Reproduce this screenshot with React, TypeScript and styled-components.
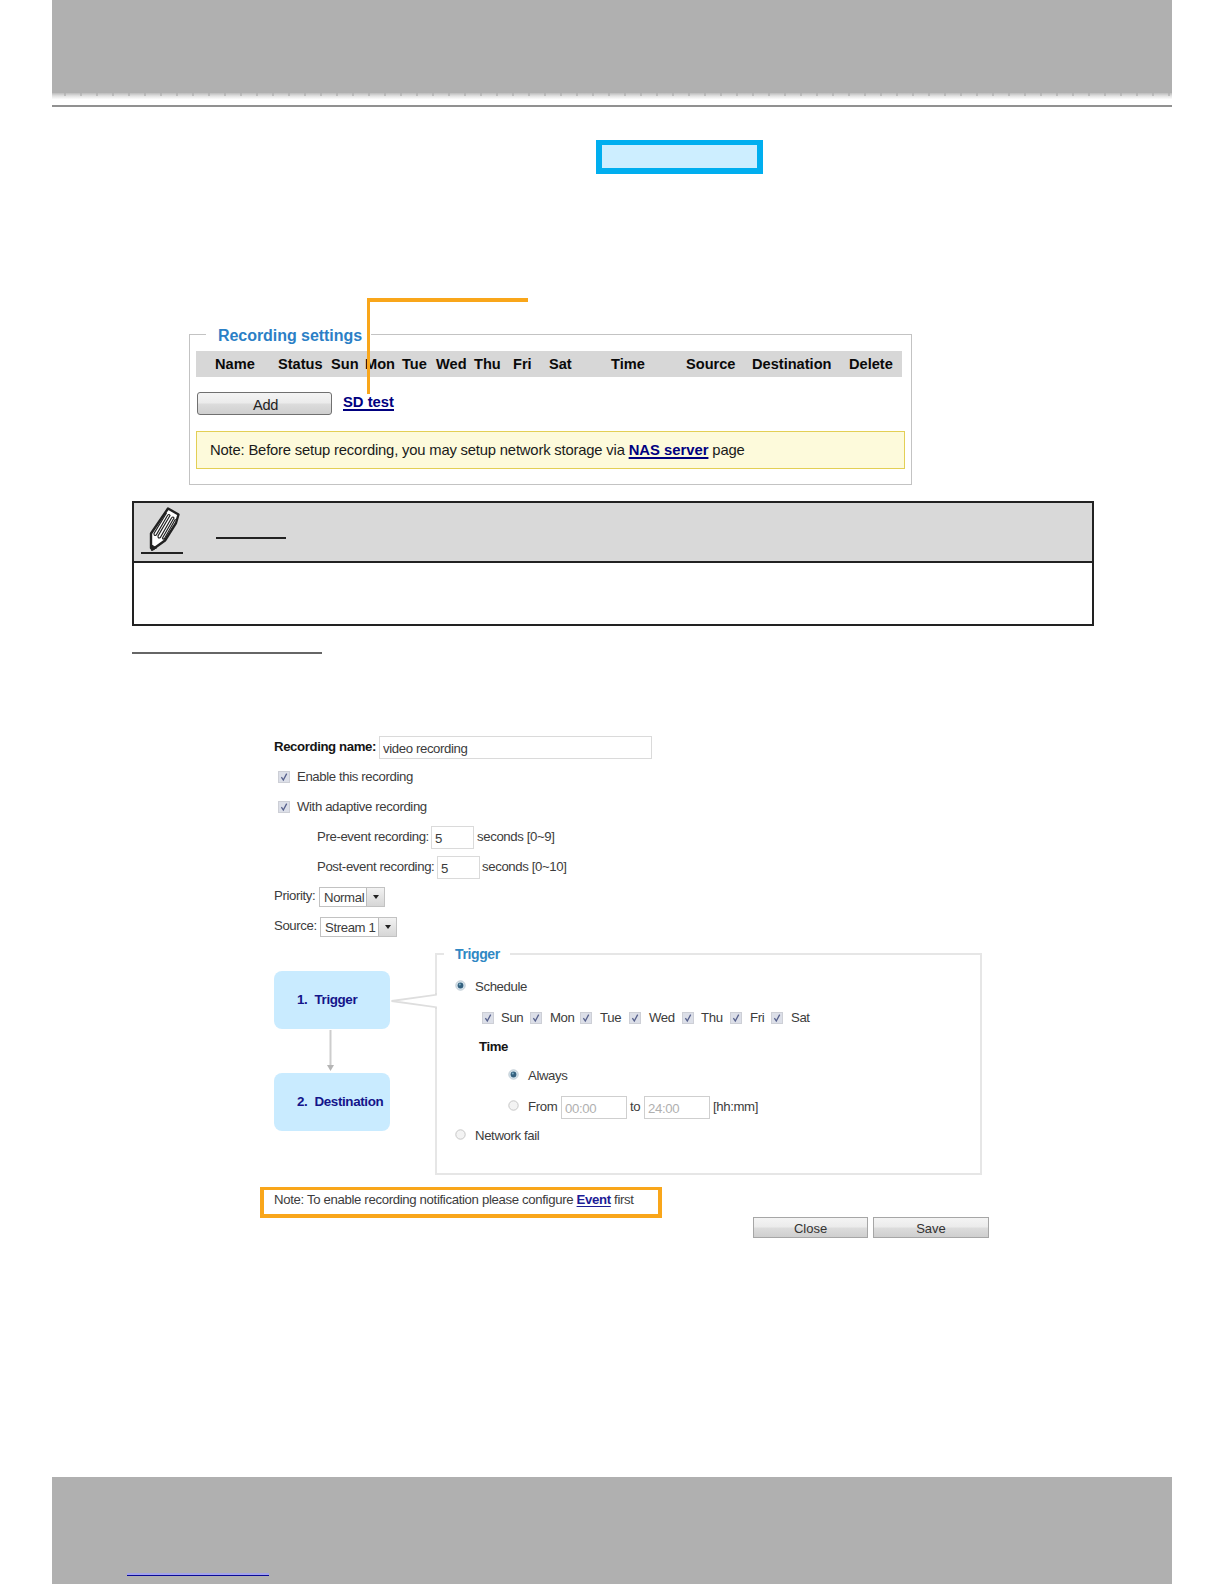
import React from "react";
import styled, { createGlobalStyle, css } from "styled-components";

const GlobalStyle = createGlobalStyle`
  * { box-sizing: border-box; }
  body { margin: 0; background: #fff; font-family: "Liberation Sans", Arial, sans-serif; }
`;

const Page = styled.main`
  width: 1224px;
  height: 1584px;
  display: flex;
  flex-direction: column;
  align-items: flex-start;
  overflow: hidden;
  background: #fff;
`;

const Header = styled.header`
  width: 1120px;
  margin-left: 52px;
  height: 107px;
  flex: none;
  display: flex;
  flex-direction: column;
  border-bottom: 2px solid #919191;
`;

const HeaderFill = styled.div`
  height: 93px;
  background: #b0b0b0;
`;

const HeaderFade = styled.div`
  height: 6px;
  background:
    repeating-linear-gradient(90deg, transparent 0 12px, rgba(176, 176, 176, 0.7) 12px 14px, transparent 14px 16px) 0 0 / 100% 3px no-repeat,
    linear-gradient(#bcbcbc, #e2e2e2 50%, #fcfcfc);
`;

const Highlight = styled.div`
  width: 167px;
  height: 34px;
  flex: none;
  margin: 33px 0 0 596px;
  background: #cdeeff;
  border: 6px solid #00aeef;
  border-top-width: 5px;
`;

const RecordingPanel = styled.section`
  position: relative;
  width: 723px;
  height: 151px;
  flex: none;
  margin: 160px 0 0 189px;
  border: 1px solid #c3c3c3;
`;

const PanelTitle = styled.h2`
  width: 165px;
  height: 20px;
  margin: -10px 0 0 16px;
  padding-left: 12px;
  background: #fff;
  color: #2b7fc6;
  font-size: 16px;
  line-height: 22px;
  letter-spacing: -0.05px;
  white-space: nowrap;
`;

const Pointer = styled.div`
  position: absolute;
  left: 177px;
  top: -37px;
  width: 161px;
  height: 96px;
  border-left: 3px solid #f9a61a;
  border-top: 4px solid #f9a61a;
  pointer-events: none;
`;

const HeadRow = styled.div`
  display: grid;
  grid-template-columns: 63px 53px 34px 37px 34px 38px 39px 36px 62px 75px 66px 97px 53px;
  width: 706px;
  height: 26px;
  margin: 6px 0 0 6px;
  padding-left: 19px;
  background: #d7d7d7;
  font-size: 14.6px;
  font-weight: bold;
  line-height: 27px;
  color: #0a0a0a;
  white-space: nowrap;
`;

const ActionRow = styled.div`
  display: flex;
  height: 23px;
  margin: 15px 0 0 7px;
`;

const buttonFace = css`
  display: flex;
  align-items: center;
  justify-content: center;
  padding: 0;
  font-family: inherit;
  background: linear-gradient(#f4f4f4, #ebebeb 48%, #dcdcdc 52%, #cfcfcf);
`;

const AddButton = styled.button`
  ${buttonFace}
  width: 135px;
  height: 23px;
  padding: 3px 0 0 2px;
  border: 1px solid #707070;
  border-radius: 3px;
  font-size: 14.6px;
  letter-spacing: -0.3px;
  color: #222;
`;

const BlueLink = styled.a<{ $thick?: boolean }>`
  color: ${(p) => (p.$thick ? "#00007f" : "#1c1c96")};
  font-weight: bold;
  text-decoration: underline;
  text-decoration-skip-ink: none;
  text-decoration-thickness: ${(p) => (p.$thick ? "2px" : "1px")};
  text-underline-offset: 2px;
  white-space: nowrap;
`;

const SdLink = styled(BlueLink)`
  margin: 1px 0 0 11px;
  font-size: 14.8px;
  line-height: 18px;
`;

const YellowNote = styled.p`
  width: 709px;
  height: 38px;
  margin: 16px 0 0 6px;
  padding-left: 13px;
  background: #fdfadb;
  border: 1px solid #e3cf55;
  color: #1a1a1a;
  font-size: 14.8px;
  line-height: 36px;
  letter-spacing: -0.18px;
  white-space: nowrap;

  a { letter-spacing: 0; }
`;

const NoteTable = styled.section`
  width: 962px;
  height: 125px;
  flex: none;
  margin: 16px 0 0 132px;
  border: 2px solid #222;
`;

const NoteHead = styled.div`
  display: flex;
  height: 60px;
  background: #d9d9d9;
  border-bottom: 2px solid #222;
`;

const Pencil = styled.svg`
  display: block;
  width: 56px;
  height: 58px;
`;

const Rule = styled.div<{ $w: number; $color: string }>`
  width: ${(p) => p.$w}px;
  height: 2px;
  flex: none;
  background: ${(p) => p.$color};
`;

const HeadRule = styled(Rule)`
  margin: 34px 0 0 26px;
`;

const SectionRule = styled(Rule)`
  margin: 26px 0 0 132px;
`;

const Form = styled.form`
  width: 740px;
  height: 585px;
  flex: none;
  margin: 78px 0 0 260px;
  display: flex;
  flex-direction: column;
  align-items: flex-start;
  font-size: 13.2px;
  letter-spacing: -0.38px;
  color: #3c3c3c;
`;

const Row = styled.div<{ $h?: number; $indent?: number }>`
  display: flex;
  align-items: center;
  flex: none;
  height: ${(p) => p.$h ?? 30}px;
  padding-left: ${(p) => p.$indent ?? 14}px;
  white-space: nowrap;
`;

const Text = styled.span<{ $w: number; $bold?: boolean }>`
  width: ${(p) => p.$w}px;
  flex: none;
  line-height: 16px;
  font-weight: ${(p) => (p.$bold ? "bold" : "normal")};
  color: ${(p) => (p.$bold ? "#151515" : "inherit")};
`;

const Field = styled.input<{ $w: number; $muted?: boolean; $end?: number }>`
  width: ${(p) => p.$w}px;
  height: 23px;
  flex: none;
  margin: 1px ${(p) => p.$end ?? 3}px 0 0;
  padding: 2px 0 0 3px;
  border: ${(p) => (p.$muted ? "1px solid #cfcfcf" : "1px solid #dadada")};
  outline: 0;
  background: #fff;
  font: inherit;
  letter-spacing: inherit;
  color: ${(p) => (p.$muted ? "#b0b0b0" : "#3c3c3c")};
`;

const Select = styled.div<{ $w: number }>`
  display: flex;
  align-items: center;
  justify-content: space-between;
  width: ${(p) => p.$w}px;
  height: 20px;
  margin-top: 1px;
  padding: 2px 0 0 4px;
  border: 1px solid #c2c2c2;
  line-height: 17px;
`;

const SelectArrow = styled.span`
  display: flex;
  align-items: center;
  justify-content: center;
  width: 18px;
  height: 18px;
  margin-top: -2px;
  border-left: 1px solid #bcbcbc;
  background: linear-gradient(#f2f2f2, #d6d6d6);

  &::after {
    content: "";
    border: 3px solid transparent;
    border-top: 4px solid #222;
    border-bottom: 0;
  }
`;

const CheckIcon = styled.svg<{ $gap: number }>`
  width: 12px;
  height: 12px;
  flex: none;
  margin-right: ${(p) => p.$gap}px;
`;

const RadioIcon = styled.svg`
  width: 11px;
  height: 11px;
  flex: none;
  margin: -3px 9px 0 0;
`;

const Flow = styled.div`
  display: flex;
  flex: none;
  height: 234px;
  padding: 12px 0 0 14px;
`;

const Steps = styled.div`
  display: flex;
  flex-direction: column;
  width: 116px;
  padding-top: 18px;
`;

const Step = styled.div`
  display: flex;
  align-items: center;
  height: 58px;
  padding: 0 0 2px 23px;
  border-radius: 8px;
  background: #c9ebff;
  color: #14148a;
  font-size: 13.4px;
  font-weight: bold;
  white-space: nowrap;
`;

const StepNo = styled.span`
  width: 17.5px;
`;

const StepArrow = styled.svg`
  display: block;
  width: 116px;
  height: 44px;
`;

const Callout = styled.svg`
  position: relative;
  z-index: 1;
  width: 47px;
  height: 18px;
  flex: none;
  margin: 39px -2px 0 0;
`;

const TriggerPanel = styled.div`
  width: 547px;
  height: 222px;
  border: 2px solid #e6e6e6;
`;

const TriggerTitle = styled.h3`
  width: 66px;
  height: 22px;
  margin: -12px 0 7px 7px;
  padding-left: 11px;
  background: #fff;
  color: #3088c4;
  font-size: 14px;
  line-height: 22px;
`;

const EventNote = styled.p`
  width: 402px;
  height: 31px;
  flex: none;
  margin: 12px 0 0;
  padding-left: 10px;
  border: 4px solid #f9a61a;
  border-top-width: 3px;
  line-height: 20px;
  letter-spacing: -0.34px;
  white-space: nowrap;
`;

const Buttons = styled.div`
  display: flex;
  gap: 5px;
  margin: -1px 0 0 493px;
`;

const FormButton = styled.button<{ $w: number }>`
  ${buttonFace}
  width: ${(p) => p.$w}px;
  height: 21px;
  padding-top: 2px;
  border: 1px solid #a6a6a6;
  font-size: 13px;
  color: #333;
`;

const Footer = styled.footer`
  width: 1120px;
  height: 107px;
  flex: none;
  margin: 160px 0 0 52px;
  padding: 96px 0 0 75px;
  background: #b0b0b0;
`;

const FooterLink = styled.div`
  width: 142px;
  height: 3px;
  background: #a3a3ea;
  border-bottom: 1px solid #0a0a96;
`;

const columns = ["Name", "Status", "Sun", "Mon", "Tue", "Wed", "Thu", "Fri", "Sat", "Time", "Source", "Destination", "Delete"];

/* Day, gap after its checkbox, and label width up to the next checkbox. */
const days: [string, number, number][] = [
  ["Sun", 7, 29],
  ["Mon", 8, 30],
  ["Tue", 8, 29],
  ["Wed", 8, 33],
  ["Thu", 7, 29],
  ["Fri", 8, 21],
  ["Sat", 8, 24],
];

function Check({ gap }: { gap: number }) {
  return (
    <CheckIcon $gap={gap} viewBox="0 0 12 12">
      <rect x=".5" y=".5" width="11" height="11" fill="#dcdfe8" stroke="#cdcfd6" />
      <path d="M3.400 6.200l1.900 2.800L8.700 2.600" fill="none" stroke="#56608c" strokeWidth="1.300" />
    </CheckIcon>
  );
}

function Radio({ on }: { on?: boolean }) {
  return (
    <RadioIcon viewBox="0 0 11 11">
      <circle cx="5.5" cy="5.5" r="4.7" fill={on ? "#d5e3ec" : "#f3f3f3"} stroke={on ? "#c0ccd4" : "#c6c6c6"} />
      {on && <circle cx="5.5" cy="5.5" r="2.9" fill="#35617f" />}
      {on && <circle cx="4.8" cy="4.6" r="1" fill="#7fb0c8" />}
    </RadioIcon>
  );
}

export default function App() {
  return (
    <Page>
      <GlobalStyle />
      <Header>
        <HeaderFill />
        <HeaderFade />
      </Header>
      <Highlight />

      <RecordingPanel>
        <PanelTitle>Recording settings</PanelTitle>
        <HeadRow>
          {columns.map((c) => (
            <span key={c}>{c}</span>
          ))}
        </HeadRow>
        <ActionRow>
          <AddButton type="button">Add</AddButton>
          <SdLink $thick>SD test</SdLink>
        </ActionRow>
        <YellowNote>
          Note: Before setup recording, you may setup network storage via <BlueLink $thick>NAS server</BlueLink> page
        </YellowNote>
        <Pointer />
      </RecordingPanel>

      <NoteTable>
        <NoteHead>
          <Pencil viewBox="0 0 56 58">
            <path d="M34 5.500L44.500 11.500 42 20 31 37.500 18.500 46.500 17 45V30.500z" fill="#fff" stroke="#222" strokeWidth="2.400" strokeLinejoin="round" />
            <path d="M17 41.500l5.500 3.500-5 2.500z" fill="#222" stroke="#222" />
            <path
              d="M32.500 10L20 30.500q0 3 2.200 1.500L33.500 12.500q1.500-2 2.500 0L24 33q0 3 2.300 1.500L37.500 15q1.500-2 2.500 0L28.500 35q.5 2 2 .5L41.500 16"
              fill="none"
              stroke="#222"
              strokeWidth="1.200"
            />
            <path d="M7 50h42" stroke="#222" strokeWidth="2" />
          </Pencil>
          <HeadRule $w={70} $color="#222" />
        </NoteHead>
      </NoteTable>
      <SectionRule $w={190} $color="#666" />

      <Form>
        <Row>
          <Text $w={105} $bold>Recording name:</Text>
          <Field $w={273} defaultValue="video recording" />
        </Row>
        <Row $indent={18}>
          <Check gap={7} />
          <Text $w={120}>Enable this recording</Text>
        </Row>
        <Row $indent={18}>
          <Check gap={7} />
          <Text $w={130}>With adaptive recording</Text>
        </Row>
        <Row $indent={57}>
          <Text $w={114}>Pre-event recording:</Text>
          <Field $w={43} defaultValue="5" />
          <Text $w={90}>seconds [0~9]</Text>
        </Row>
        <Row $indent={57} $h={29}>
          <Text $w={120}>Post-event recording:</Text>
          <Field $w={43} $end={2} defaultValue="5" />
          <Text $w={90}>seconds [0~10]</Text>
        </Row>
        <Row>
          <Text $w={45}>Priority:</Text>
          <Select $w={66}>Normal<SelectArrow /></Select>
        </Row>
        <Row>
          <Text $w={46}>Source:</Text>
          <Select $w={77}>Stream 1<SelectArrow /></Select>
        </Row>

        <Flow>
          <Steps>
            <Step><StepNo>1.</StepNo>Trigger</Step>
            <StepArrow viewBox="0 0 116 44">
              <path d="M56.500 1v36" stroke="#cdcdcd" strokeWidth="2" />
              <path d="M53 36h7l-3.500 6z" fill="#b5b5b5" />
            </StepArrow>
            <Step><StepNo>2.</StepNo>Destination</Step>
          </Steps>
          <Callout viewBox="0 0 47 18">
            <path d="M47 2.500L1.500 9 47 15.500z" fill="#fff" />
            <path d="M46 1v1.800L1.500 9 46 15.200V17" fill="none" stroke="#dedede" strokeWidth="1.800" />
          </Callout>
          <TriggerPanel>
            <TriggerTitle>Trigger</TriggerTitle>
            <Row $indent={18}>
              <Radio on />
              <Text $w={60}>Schedule</Text>
            </Row>
            <Row $indent={45} $h={31}>
              {days.map(([name, gap, width]) => (
                <React.Fragment key={name}>
                  <Check gap={gap} />
                  <Text $w={width}>{name}</Text>
                </React.Fragment>
              ))}
            </Row>
            <Row $indent={42} $h={27}>
              <Text $w={40} $bold>Time</Text>
            </Row>
            <Row $indent={71} $h={32}>
              <Radio on />
              <Text $w={50}>Always</Text>
            </Row>
            <Row $indent={71}>
              <Radio />
              <Text $w={33}>From</Text>
              <Field $w={66} $muted defaultValue="00:00" />
              <Text $w={14}>to</Text>
              <Field $w={66} $muted defaultValue="24:00" />
              <Text $w={50}>[hh:mm]</Text>
            </Row>
            <Row $indent={18} $h={28}>
              <Radio />
              <Text $w={70}>Network fail</Text>
            </Row>
          </TriggerPanel>
        </Flow>

        <EventNote>
          Note: To enable recording notification please configure <BlueLink>Event</BlueLink> first
        </EventNote>
        <Buttons>
          <FormButton type="button" $w={115}>Close</FormButton>
          <FormButton type="button" $w={116}>Save</FormButton>
        </Buttons>
      </Form>

      <Footer>
        <FooterLink />
      </Footer>
    </Page>
  );
}
